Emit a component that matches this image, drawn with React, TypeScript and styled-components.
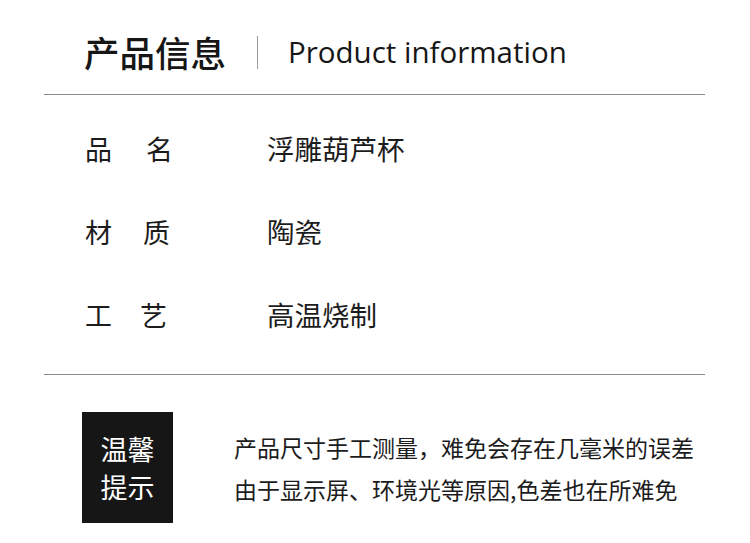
import React from "react";
import styled, { createGlobalStyle } from "styled-components";

const GlobalStyle = createGlobalStyle`
  html, body {
    margin: 0;
    padding: 0;
    background: #ffffff;
  }
  body {
    font-family: "Noto Sans CJK SC", "Noto Sans", sans-serif;
    color: #1c1c1c;
  }
`;

const Page = styled.div`
  width: 750px;
  height: 543px;
  background: #fff;
  overflow: hidden;
`;

const Header = styled.header`
  display: flex;
  align-items: center;
  margin: 0 45px 0 44px;
  padding: 34px 0 24px 40px;
  border-bottom: 1px solid #8a8a8a;
`;

const TitleCn = styled.h1`
  margin: 0;
  font-family: "Noto Sans CJK SC", sans-serif;
  font-size: 35.5px;
  font-weight: 500;
  line-height: 36px;
  color: #161616;
`;

const Divider = styled.span`
  width: 1px;
  height: 33px;
  background: #9a9a9a;
  margin: 0 30px 0 31px;
`;

const TitleEn = styled.span`
  font-family: "Open Sans", "Noto Sans", sans-serif;
  font-size: 29.5px;
  font-weight: 500;
  line-height: 36px;
  color: #161616;
`;

const Specs = styled.section`
  margin: 0 45px 0 44px;
  padding: 12px 0 18px 0;
  border-bottom: 1px solid #8a8a8a;
`;

const Row = styled.div`
  display: flex;
  align-items: center;
  height: 83px;
  padding-left: 41px;
`;

const Label = styled.div<{ $gap: number }>`
  display: flex;
  gap: ${(p) => p.$gap}px;
  width: 182px;
  font-size: 27px;
  line-height: 1;
  color: #1c1c1c;
`;

const Value = styled.div`
  font-size: 27.5px;
  line-height: 1;
  color: #1c1c1c;
`;

const Notice = styled.section`
  display: flex;
  align-items: center;
  padding: 37px 0 0 82px;
`;

const Badge = styled.div`
  display: flex;
  flex-direction: column;
  align-items: center;
  justify-content: center;
  gap: 11px;
  width: 91px;
  height: 111px;
  background: #161616;
  color: #ffffff;
  font-size: 27px;
  line-height: 27px;
`;

const NoticeText = styled.div`
  margin-left: 61px;
  display: flex;
  flex-direction: column;
  gap: 18px;
  font-size: 23px;
  line-height: 24px;
  color: #1c1c1c;
`;

const specs = [
  { label: ["品", "名"], gap: 34, value: "浮雕葫芦杯" },
  { label: ["材", "质"], gap: 31, value: "陶瓷" },
  { label: ["工", "艺"], gap: 28, value: "高温烧制" },
];

export default function App() {
  return (
    <Page>
      <GlobalStyle />
      <Header>
        <TitleCn>产品信息</TitleCn>
        <Divider />
        <TitleEn>Product information</TitleEn>
      </Header>
      <Specs>
        {specs.map((s) => (
          <Row key={s.value}>
            <Label $gap={s.gap}>
              <span>{s.label[0]}</span>
              <span>{s.label[1]}</span>
            </Label>
            <Value>{s.value}</Value>
          </Row>
        ))}
      </Specs>
      <Notice>
        <Badge>
          <span>温馨</span>
          <span>提示</span>
        </Badge>
        <NoticeText>
          <span>产品尺寸手工测量，难免会存在几毫米的误差</span>
          <span>由于显示屏、环境光等原因,色差也在所难免</span>
        </NoticeText>
      </Notice>
    </Page>
  );
}
